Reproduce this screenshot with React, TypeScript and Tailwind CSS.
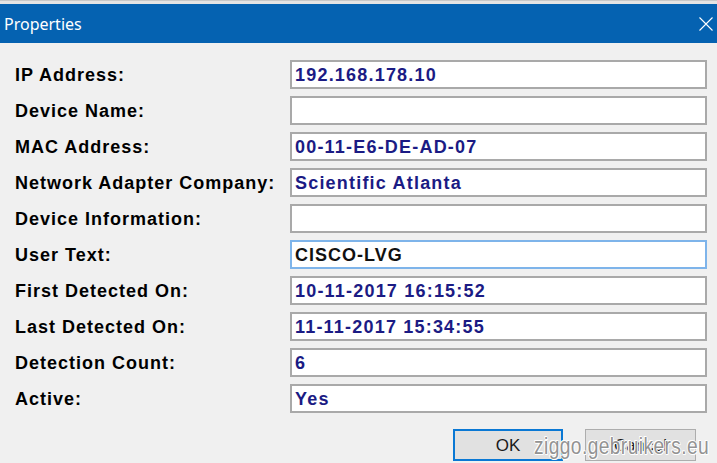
import React from "react";

type Row = {
  label: string;
  value: string;
  editable?: boolean;
};

const rows: Row[] = [
  { label: "IP Address:", value: "192.168.178.10" },
  { label: "Device Name:", value: "" },
  { label: "MAC Address:", value: "00-11-E6-DE-AD-07" },
  { label: "Network Adapter Company:", value: "Scientific Atlanta" },
  { label: "Device Information:", value: "" },
  { label: "User Text:", value: "CISCO-LVG", editable: true },
  { label: "First Detected On:", value: "10-11-2017 16:15:52" },
  { label: "Last Detected On:", value: "11-11-2017 15:34:55" },
  { label: "Detection Count:", value: "6" },
  { label: "Active:", value: "Yes" },
];

const PropertyRow: React.FC<Row> = ({ label, value, editable }) => (
  <div className="flex items-center h-[29px]">
    <div className="w-[290px] pl-[15px] text-[18px] font-bold tracking-[1px] text-black leading-none">
      {label}
    </div>
    <div
      className={
        editable
          ? "flex-1 h-full flex items-center bg-white border-2 border-[#7eb4ea] pl-[3px]"
          : "flex-1 h-full flex items-center bg-white border-2 border-[#a9a9a9] pl-[3px]"
      }
    >
      <span
        className={
          editable
            ? "text-[18px] font-bold tracking-[1px] leading-none text-[#111]"
            : "text-[18px] font-bold tracking-[1.2px] leading-none text-[#1b1b84]"
        }
      >
        {value}
      </span>
    </div>
  </div>
);

export default function App() {
  return (
    <div
      className="w-[717px] h-[463px] bg-[#f0f0f0] overflow-hidden relative"
      style={{ fontFamily: '"Liberation Sans", Arial, sans-serif' }}
    >
      {/* window frame edge above the caption */}
      <div className="h-[4px] bg-[#e4e4e4] border-t border-[#c8c8c8]" />

      {/* caption bar */}
      <div className="h-[39px] bg-[#0562b1] flex items-center justify-between pl-[4px] pr-[4px]">
        <span
          className="text-white text-[16px] leading-none"
          style={{ fontFamily: '"Noto Sans", "Open Sans", sans-serif' }}
        >
          Properties
        </span>
        <svg width="14" height="14" viewBox="0 0 14 14">
          <path d="M0.5 0.5 L13.5 13.5 M13.5 0.5 L0.5 13.5" stroke="white" strokeWidth="1.1" />
        </svg>
      </div>

      {/* property list */}
      <div className="flex flex-col gap-[7px] pt-[17px] pr-[10px]">
        {rows.map((row) => (
          <PropertyRow key={row.label} {...row} />
        ))}
      </div>

      {/* dialog buttons */}
      <div className="flex justify-end gap-[22px] pt-[16px] pr-[21px]">
        <button className="w-[110px] h-[32px] bg-[#e1e1e1] border-2 border-[#0a78d4] text-[17px] text-[#1a1a1a] leading-none">
          OK
        </button>
        <button className="w-[111px] h-[32px] bg-[#e1e1e1] border border-[#adadad] text-[17px] text-[#1a1a1a] leading-none">
          Cancel
        </button>
      </div>

      {/* watermark */}
      <div
        className="absolute left-[534px] top-[434px] text-[24px] leading-none text-[#939393] origin-left scale-x-[0.8] tracking-[0.5px]"
        style={{
          textShadow:
            "1px 0 0 #fff, -1px 0 0 #fff, 0 1px 0 #fff, 0 -1px 0 #fff, 1px 1px 0 #fff, -1px -1px 0 #fff",
        }}
      >
        ziggo.gebruikers.eu
      </div>
    </div>
  );
}
